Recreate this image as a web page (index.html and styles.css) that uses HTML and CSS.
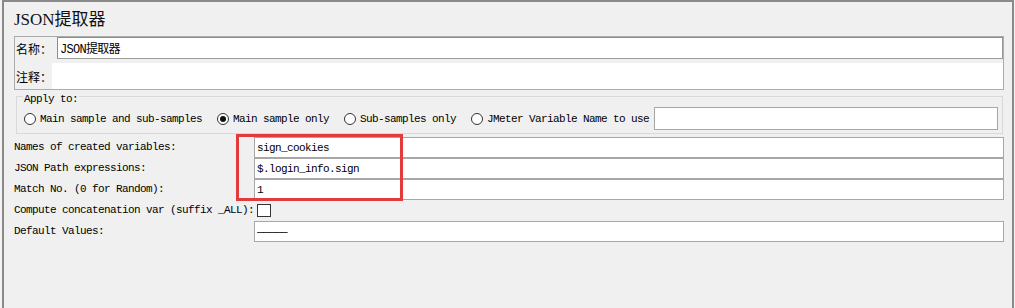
FILE: index.html
```html
<html>
<head>
<meta charset="utf-8">
<link rel="stylesheet" href="styles.css">
</head>
<body>
<div class="frame">
	<div class="title">JSON提取器</div>

	<div class="namepanel">
		<div class="namerow">
			<span class="cjk lbl-name">名称：</span>
			<input class="field namefield" type="text" value="JSON提取器">
		</div>
		<div class="commentrow">
			<span class="cjk lbl-comment">注释：</span>
			<input class="field commentfield" type="text" value="">
		</div>
	</div>

	<fieldset class="applyto">
		<legend>Apply to:</legend>
		<div class="radios">
			<span class="opt first"><span class="radio"></span>Main sample and sub-samples</span>
			<span class="opt"><span class="radio on"></span>Main sample only</span>
			<span class="opt"><span class="radio"></span>Sub-samples only</span>
			<span class="opt"><span class="radio"></span>JMeter Variable Name to use</span>
			<input class="field varfield" type="text" value="">
		</div>
	</fieldset>

	<div class="props">
		<span class="lbl">Names of created variables:</span>
		<input class="field" type="text" value="sign_cookies">
		<span class="lbl">JSON Path expressions:</span>
		<input class="field" type="text" value="$.login_info.sign">
		<span class="lbl">Match No. (0 for Random):</span>
		<input class="field" type="text" value="1">
		<span class="lbl">Compute concatenation var (suffix _ALL):</span>
		<span class="checkcell"><span class="checkbox"></span></span>
		<span class="lbl">Default Values:</span>
		<input class="field" type="text" value="—————">
		<div class="highlight"></div>
	</div>
</div>
</body>
</html>
```
FILE: styles.css
```css
body{
margin: 0;
background: #f3f3f3;
overflow: hidden;
}
.frame{
margin-left: 2px;
width: 1012px;
height: 308px;
box-sizing: border-box;
border-top: 2px solid #8a8a8a;
border-left: 2px solid #8a8a8a;
border-right: 2px solid #8a8a8a;
background: #f0f0f0;
padding: 0 8px 0 10px;
font-family: "Liberation Mono", "Noto Sans CJK SC", monospace;
font-size: 11px;
letter-spacing: -0.6px;
color: #000;
}
.title{
height: 34px;
line-height: 36px;
font-family: "Liberation Serif", "Noto Sans CJK SC", serif;
font-size: 17px;
letter-spacing: 0;
color: #111;
}
.cjk{
font-family: "Noto Sans CJK SC", sans-serif;
font-size: 12px;
letter-spacing: 0;
}
.namepanel{
border: 1px solid #acacac;
}
.namerow{
display: flex;
align-items: center;
height: 22px;
}
.lbl-name{
width: 41px;
padding-left: 1px;
}
.commentrow{
display: flex;
align-items: center;
height: 30px;
}
.lbl-comment{
width: 36px;
padding-left: 1px;
margin-top: 4px;
}
.field{
box-sizing: border-box;
height: 21px;
margin: 0;
padding: 0 2px;
border: 1px solid #a7a7a7;
background: #fff;
font-family: "Liberation Mono", "Noto Sans CJK SC", monospace;
font-size: 11px;
letter-spacing: -0.6px;
color: #000;
outline: none;
}
.namefield{
flex: 1;
height: 22px;
border: 1px solid #9a9a9a;
border-left-color: #8c8c8c;
border-top-color: #8c8c8c;
font-size: 12px;
letter-spacing: -0.7px;
}
.commentfield{
flex: 1;
height: 26px;
margin-top: 4px;
border: none;
}
.applyto{
margin: 0 1px 0 2px;
padding: 0 4px 3px 6px;
border: 1px solid #d9d9d9;
}
.applyto legend{
padding: 5px 1px 0 1px;
line-height: 8px;
font-size: 11px;
}
.radios{
display: flex;
align-items: center;
height: 23px;
margin-top: 4px;
white-space: nowrap;
}
.opt{
display: flex;
align-items: center;
margin-left: 15px;
}
.opt.first{
margin-left: 1px;
}
.radio{
box-sizing: border-box;
width: 12px;
height: 12px;
margin-right: 4px;
border: 1px solid #333;
border-radius: 50%;
background: #fff;
display: flex;
align-items: center;
justify-content: center;
}
.radio.on::after{
content: "";
width: 6px;
height: 6px;
border-radius: 50%;
background: #111;
}
.varfield{
flex: 1;
height: 23px;
margin-left: 5px;
}
.props{
position: relative;
margin-top: 3px;
display: grid;
grid-template-columns: 240px 1fr;
grid-auto-rows: 21px;
}
.lbl{
display: flex;
align-items: center;
padding-bottom: 2px;
white-space: nowrap;
}
.checkcell{
display: flex;
align-items: center;
}
.checkbox{
box-sizing: border-box;
width: 14px;
height: 13px;
margin-left: 3px;
border: 1px solid #333;
background: #fff;
}
.highlight{
position: absolute;
left: 222px;
top: -3px;
width: 167px;
height: 67px;
box-sizing: border-box;
border: 3px solid #e23b3b;
}
```
